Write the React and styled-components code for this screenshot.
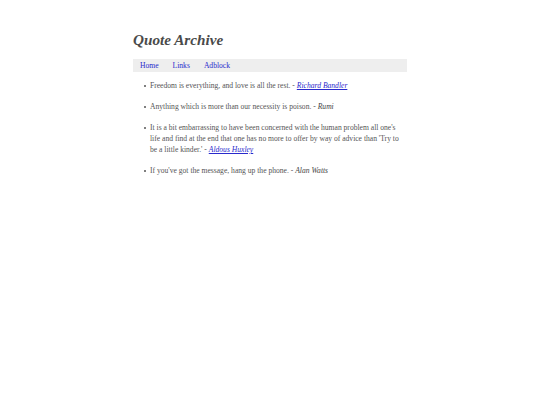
import React from "react";
import styled, { createGlobalStyle } from "styled-components";

const Global = createGlobalStyle`
  html, body { margin: 0; padding: 0; background: #fff; }
  body { font-family: "Liberation Serif", "Times New Roman", serif; color: #555; }
`;

const Page = styled.div`
  width: 274px;
  margin: 0 auto;
  padding-top: 31px;
`;

const Title = styled.h1`
  margin: 0 0 10px 0;
  font-size: 15.2px;
  font-weight: bold;
  font-style: italic;
  color: #4a4a4a;
  line-height: 18px;
`;

const Nav = styled.nav`
  display: flex;
  background: #eeeeee;
  height: 13px;
  align-items: center;
`;

const NavLink = styled.a`
  font-size: 7.6px;
  color: #2a2acc;
  text-decoration: none;
  padding: 0 7px;
  line-height: 13px;
`;

const List = styled.ul`
  margin: 8px 0 0 0;
  padding-left: 17px;
  list-style: none;
`;

const Item = styled.li`
  position: relative;
  font-size: 7.6px;
  line-height: 11px;
  margin-bottom: 10px;
  color: #555;

  &::before {
    content: "";
    position: absolute;
    left: -6px;
    top: 4.5px;
    width: 2.4px;
    height: 2.4px;
    border-radius: 50%;
    background: #555;
  }
`;

const Author = styled.i`
  color: #444;
`;

const AuthorLink = styled.a`
  font-style: italic;
  color: #2a2acc;
  text-decoration: underline;
`;

const quotes = [
  { text: "Freedom is everything, and love is all the rest.", author: "Richard Bandler", link: true },
  { text: "Anything which is more than our necessity is poison.", author: "Rumi" },
  {
    text: "It is a bit embarrassing to have been concerned with the human problem all one's life and find at the end that one has no more to offer by way of advice than 'Try to be a little kinder.'",
    author: "Aldous Huxley",
    link: true,
  },
  { text: "If you've got the message, hang up the phone.", author: "Alan Watts" },
];

export default function App() {
  return (
    <>
      <Global />
      <Page>
        <Title>Quote Archive</Title>
        <Nav>
          <NavLink href="#">Home</NavLink>
          <NavLink href="#">Links</NavLink>
          <NavLink href="#">Adblock</NavLink>
        </Nav>
        <List>
          {quotes.map((q, i) => (
            <Item key={i}>
              {q.text} -{" "}
              {q.link ? <AuthorLink href="#">{q.author}</AuthorLink> : <Author>{q.author}</Author>}
            </Item>
          ))}
        </List>
      </Page>
    </>
  );
}
